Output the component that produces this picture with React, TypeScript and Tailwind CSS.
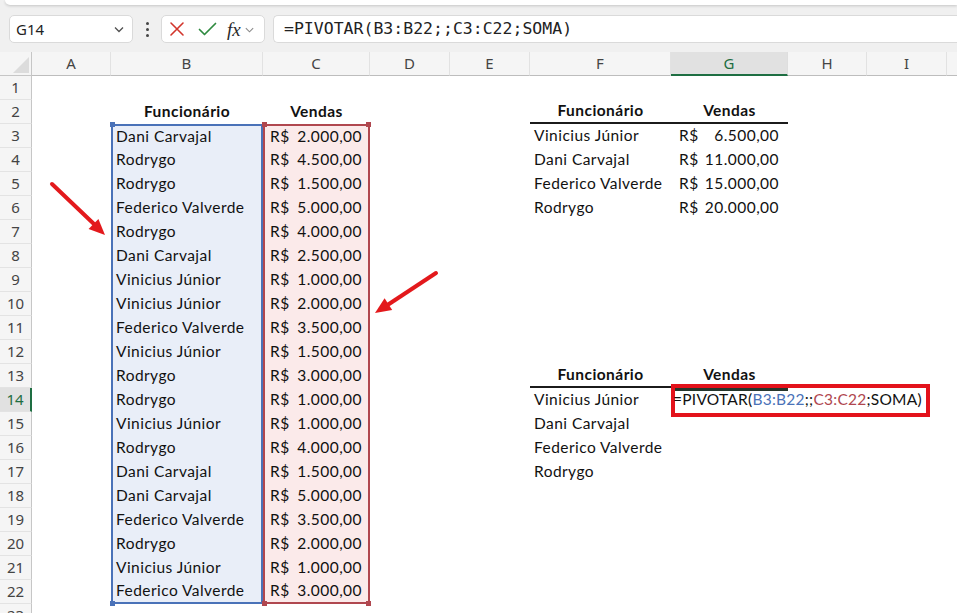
import type { ReactNode } from 'react';

// colunas da planilha (larguras medidas no print)
const COLS = [
  { k: 'A', w: 'w-[79px]' },
  { k: 'B', w: 'w-[152px]' },
  { k: 'C', w: 'w-[107px]' },
  { k: 'D', w: 'w-[80px]' },
  { k: 'E', w: 'w-[80px]' },
  { k: 'F', w: 'w-[141px]' },
  { k: 'G', w: 'w-[117px]' },
  { k: 'H', w: 'w-[79px]' },
  { k: 'I', w: 'w-[80px]' },
  { k: 'J', w: 'w-[120px]' },
];

const DADOS: [string, string][] = [
  ['Dani Carvajal', '2.000,00'],
  ['Rodrygo', '4.500,00'],
  ['Rodrygo', '1.500,00'],
  ['Federico Valverde', '5.000,00'],
  ['Rodrygo', '4.000,00'],
  ['Dani Carvajal', '2.500,00'],
  ['Vinicius Júnior', '1.000,00'],
  ['Vinicius Júnior', '2.000,00'],
  ['Federico Valverde', '3.500,00'],
  ['Vinicius Júnior', '1.500,00'],
  ['Rodrygo', '3.000,00'],
  ['Rodrygo', '1.000,00'],
  ['Vinicius Júnior', '1.000,00'],
  ['Rodrygo', '4.000,00'],
  ['Dani Carvajal', '1.500,00'],
  ['Dani Carvajal', '5.000,00'],
  ['Federico Valverde', '3.500,00'],
  ['Rodrygo', '2.000,00'],
  ['Vinicius Júnior', '1.000,00'],
  ['Federico Valverde', '3.000,00'],
];

const RESUMO: [string, string][] = [
  ['Vinicius Júnior', '6.500,00'],
  ['Dani Carvajal', '11.000,00'],
  ['Federico Valverde', '15.000,00'],
  ['Rodrygo', '20.000,00'],
];

const NOMES = ['Vinicius Júnior', 'Dani Carvajal', 'Federico Valverde', 'Rodrygo'];

const ROWS = Array.from({ length: 23 }, (_, i) => i + 1);

function Handle({ className }: { className: string }) {
  return <span className={`absolute h-[5px] w-[5px] ${className}`} />;
}

function cell(r: number, k: string): { cls: string; node?: ReactNode } {
  // tabela de origem B2:C22
  if (r === 2 && k === 'B') return { cls: 'justify-center font-bold tracking-[0.2px]', node: 'Funcionário' };
  if (r === 2 && k === 'C') return { cls: 'justify-center font-bold tracking-[0.2px]', node: 'Vendas' };
  if (r >= 3 && r <= 22 && k === 'B') {
    const [nome] = DADOS[r - 3];
    return {
      cls: `relative bg-[#e9eef8] border-x-2 border-[#4a72b8] pl-[3px] ${r === 3 ? 'border-t-2' : ''} ${r === 22 ? 'border-b-2' : ''}`,
      node: (
        <>
          {nome}
          {r === 3 && <Handle className="left-[-3px] top-[-4px] bg-[#4a72b8]" />}
          {r === 22 && <Handle className="left-[-3px] bottom-[-4px] bg-[#4a72b8]" />}
        </>
      ),
    };
  }
  if (r >= 3 && r <= 22 && k === 'C') {
    const [, valor] = DADOS[r - 3];
    return {
      cls: `relative bg-[#fbeaea] border-x-2 border-[#b0474f] pl-[5px] pr-[6px] justify-between ${r === 3 ? 'border-t-2' : ''} ${r === 22 ? 'border-b-2' : ''}`,
      node: (
        <>
          <span>R$</span>
          <span>{valor}</span>
          {r === 3 && <Handle className="left-[-3px] top-[-4px] bg-[#b0474f]" />}
          {r === 3 && <Handle className="right-[-3px] top-[-4px] bg-[#b0474f]" />}
          {r === 22 && <Handle className="left-[-3px] bottom-[-4px] bg-[#b0474f]" />}
          {r === 22 && <Handle className="right-[-3px] bottom-[-4px] bg-[#b0474f]" />}
        </>
      ),
    };
  }

  // tabela resumo F2:G6
  if ((r === 2 || r === 13) && k === 'F')
    return { cls: 'justify-center font-bold tracking-[0.2px] border-b-2 border-[#1b1b1b]', node: 'Funcionário' };
  if ((r === 2 || r === 13) && k === 'G')
    return { cls: 'justify-center font-bold tracking-[0.2px] border-b-2 border-[#1b1b1b]', node: 'Vendas' };
  if (r >= 3 && r <= 6 && k === 'F') return { cls: 'pl-[4px]', node: RESUMO[r - 3][0] };
  if (r >= 3 && r <= 6 && k === 'G')
    return {
      cls: 'pl-[8px] pr-[9px] justify-between',
      node: (
        <>
          <span>R$</span>
          <span>{RESUMO[r - 3][1]}</span>
        </>
      ),
    };

  // segunda tabela F13:G17
  if (r >= 14 && r <= 17 && k === 'F') return { cls: 'pl-[4px]', node: NOMES[r - 14] };
  if (r === 14 && k === 'G')
    return {
      cls: 'relative z-10',
      node: (
        <>
          <span className="absolute inset-0 border-l-[3px] border-t-[3px] border-[#26362c]" />
          <span className="relative z-10 whitespace-nowrap pl-[2px] tracking-[0.25px]">
            =PIVOTAR(<span className="text-[#4a72b8]">B3:B22</span>;;
            <span className="text-[#b0474f]">C3:C22</span>;SOMA)
          </span>
          <span className="absolute left-[0px] top-[-4px] h-[33px] w-[259px] border-[4px] border-[#e3121b]" />
        </>
      ),
    };

  return { cls: '' };
}

function Toolbar() {
  return (
    <div className="h-[52px] bg-[#f0f0f0]">
      <div className="ml-[5px] h-[5px] rounded-bl-[8px] bg-white shadow-[0_1px_3px_rgba(0,0,0,0.18)]" />
      <div className="mt-[10px] flex items-center pl-[9px]">
        {/* caixa de nome */}
        <div className="flex h-[28px] w-[124px] items-center justify-between rounded-[5px] border border-[#dadada] bg-white pl-[6px] pr-[7px] font-['Noto_Sans',sans-serif] text-[15px] text-[#1f1f1f]">
          <span>G14</span>
          <svg width="12" height="12" viewBox="0 0 12 12" fill="none" stroke="#505050" strokeWidth="1.3">
            <path d="M2 4.5l4 4 4-4" />
          </svg>
        </div>
        <div className="flex w-[28px] flex-col items-center justify-center gap-[3px]">
          <span className="h-[3px] w-[3px] rounded-full bg-[#444]" />
          <span className="h-[3px] w-[3px] rounded-full bg-[#444]" />
          <span className="h-[3px] w-[3px] rounded-full bg-[#444]" />
        </div>
        {/* cancelar / confirmar / fx */}
        <div className="flex h-[28px] w-[104px] items-center rounded-[5px] border border-[#dadada] bg-white pl-[7px]">
          <svg width="16" height="16" viewBox="0 0 16 16" fill="none" stroke="#d2352c" strokeWidth="1.6" strokeLinecap="round">
            <path d="M2 2l12 12M14 2L2 14" />
          </svg>
          <svg className="ml-[13px]" width="19" height="16" viewBox="0 0 19 16" fill="none" stroke="#2f8a40" strokeWidth="1.7" strokeLinecap="round" strokeLinejoin="round">
            <path d="M1.5 8.5l5 5L17.5 2.5" />
          </svg>
          <span className="ml-[10px] font-['Liberation_Serif',serif] text-[19px] italic leading-none text-[#2a2a2a]">
            fx
          </span>
          <svg className="ml-[3px]" width="11" height="11" viewBox="0 0 12 12" fill="none" stroke="#8a8a8a" strokeWidth="1.2">
            <path d="M2 4.5l4 4 4-4" />
          </svg>
        </div>
        {/* barra de fórmulas */}
        <div className="ml-[8px] flex h-[28px] flex-1 items-center rounded-l-[5px] border border-r-0 border-[#dadada] bg-white pl-[10px] font-['DejaVu_Sans_Mono',monospace] text-[16.5px] text-[#222]">
          =PIVOTAR(B3:B22;;C3:C22;SOMA)
        </div>
      </div>
    </div>
  );
}

export default function App() {
  return (
    <div className="relative h-[613px] w-[957px] overflow-hidden bg-white">
      <Toolbar />

      {/* cabeçalho de colunas */}
      <div className="flex h-[24px] font-['Noto_Sans',sans-serif] text-[15px] text-[#444]">
        <div className="relative h-full w-[32px] shrink-0 border-b border-r border-[#c6c6c6] bg-[#f5f5f5]">
          <svg className="absolute bottom-[2px] right-[2px]" width="16" height="16" viewBox="0 0 16 16">
            <path d="M16 0V16H0Z" fill="#dcdcdc" />
          </svg>
        </div>
        {COLS.map((c) =>
          c.k === 'G' ? (
            <div key={c.k} className={`${c.w} flex h-full shrink-0 items-center justify-center border-b-2 border-r border-b-[#1e6e42] border-r-[#dedede] bg-[#e1e1e1] text-[#1e6e42]`}>
              {c.k}
            </div>
          ) : (
            <div key={c.k} className={`${c.w} flex h-full shrink-0 items-center justify-center border-b border-r border-b-[#bdbdbd] border-r-[#e2e2e2] bg-[#f5f5f5]`}>
              {c.k !== 'J' && c.k}
            </div>
          ),
        )}
      </div>

      {/* linhas */}
      {ROWS.map((r) => (
        <div key={r} className="flex h-[24px]">
          <div
            className={`flex h-full w-[32px] shrink-0 items-center justify-center border-b border-b-[#e3e3e3] font-['Noto_Sans',sans-serif] text-[15px] ${
              r === 14
                ? 'border-r-2 border-r-[#1e6e42] bg-[#e1e1e1] text-[#1e6e42]'
                : 'border-r border-r-[#c6c6c6] bg-[#f5f5f5] text-[#444]'
            }`}
          >
            {r}
          </div>
          {COLS.map((c) => {
            const { cls, node } = cell(r, c.k);
            return (
              <div
                key={c.k}
                className={`${c.w} flex h-full shrink-0 items-center font-['Lato',sans-serif] text-[15.5px] tracking-[0.45px] text-[#111] ${cls}`}
              >
                {node}
              </div>
            );
          })}
        </div>
      ))}

      {/* setas de anotação */}
      <svg className="pointer-events-none absolute left-0 top-0" width="957" height="613">
        <line x1="52" y1="184" x2="95" y2="225" stroke="#e3191c" strokeWidth="4" strokeLinecap="round" />
        <polygon points="105,235 88.6,228.9 98.4,218.9" fill="#e3191c" />
        <line x1="436" y1="273" x2="389" y2="304" stroke="#e3191c" strokeWidth="4" strokeLinecap="round" />
        <polygon points="375,313 384.6,298.3 392.2,310.1" fill="#e3191c" />
      </svg>
    </div>
  );
}
